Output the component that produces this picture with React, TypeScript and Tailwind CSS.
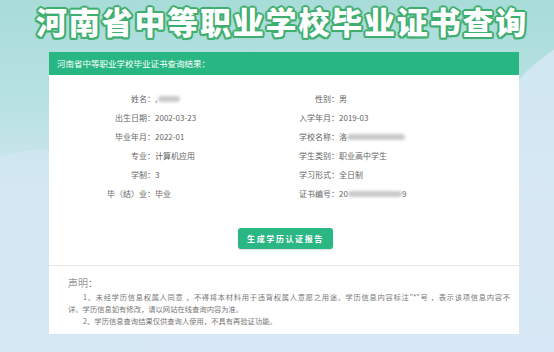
import React from "react";

const font = { fontFamily: '"Noto Sans CJK SC", "Noto Sans", sans-serif' };

function Blur({ w }: { w: number }) {
  return (
    <span
      className="inline-block h-[6px] rounded-full bg-[#c9c9c9] blur-[1.5px] align-middle"
      style={{ width: w }}
    />
  );
}

function Row({ label, value, lw }: { label: string; value: React.ReactNode; lw: string }) {
  return (
    <div className="flex h-[19px] items-center">
      <span className={`${lw} text-right`}>{label}：</span>
      <span className="flex items-center">{value}</span>
    </div>
  );
}

export default function App() {
  return (
    <div
      className="relative h-[352px] w-full overflow-hidden bg-[linear-gradient(180deg,#a8dcd9_0px,#b9e2e3_110px,#d4e7f3_200px,#d8e8f6_352px)]"
      style={font}
    >
      <div className="absolute left-[-90px] top-[150px] h-[260px] w-[260px] rounded-full bg-[#d6e8f3] opacity-60" />
      <div className="absolute left-[482px] top-[28px] h-[300px] w-[300px] rounded-full bg-[#d8e8f5] opacity-80" />

      <h1 className="relative block w-full pl-[10px] pt-[3px] text-center text-[31px] font-black leading-[36px] tracking-[1.8px] text-white [text-shadow:2px_0_0_#3fae6f,-2px_0_0_#3fae6f,0_2px_0_#3fae6f,0_-2px_0_#3fae6f,1.5px_1.5px_0_#3fae6f,-1.5px_1.5px_0_#3fae6f,1.5px_-1.5px_0_#3fae6f,-1.5px_-1.5px_0_#3fae6f,0_0_3px_#2f9a5f]">
        河南省中等职业学校毕业证书查询
      </h1>

      <div className="relative ml-[49px] mt-[13px] w-[470px] bg-white">
        <div className="flex h-[23px] items-center bg-[#28b783] pl-[8px] text-[8.5px] text-white">
          河南省中等职业学校毕业证书查询结果：
        </div>

        <div className="flex flex-col items-center pb-[16px] pt-[14.5px] text-[8px] text-[#666]">
          <div className="grid w-full grid-cols-2">
            <div className="flex flex-col">
              <Row lw="w-[106px]" label="姓名" value={<><span className="mr-[1px]">,</span><Blur w={22} /></>} />
              <Row lw="w-[106px]" label="出生日期" value="2002-03-23" />
              <Row lw="w-[106px]" label="毕业年月" value="2022-01" />
              <Row lw="w-[106px]" label="专业" value="计算机应用" />
              <Row lw="w-[106px]" label="学制" value="3" />
              <Row lw="w-[106px]" label="毕（结）业" value="毕业" />
            </div>
            <div className="flex flex-col">
              <Row lw="w-[55px]" label="性别" value="男" />
              <Row lw="w-[55px]" label="入学年月" value="2019-03" />
              <Row lw="w-[55px]" label="学校名称" value={<><span>洛</span><Blur w={58} /></>} />
              <Row lw="w-[55px]" label="学生类别" value="职业高中学生" />
              <Row lw="w-[55px]" label="学习形式" value="全日制" />
              <Row lw="w-[55px]" label="证书编号" value={<><span>20</span><Blur w={54} /><span>9</span></>} />
            </div>
          </div>

          <button className="ml-[3px] mt-[24.5px] flex h-[21px] w-[95px] items-center justify-center rounded-[3px] bg-[#2ab784] text-[8px] font-bold tracking-[1.6px] text-white shadow-[0_1px_2px_rgba(0,0,0,0.15)]">
            生成学历认证报告
          </button>
        </div>

        <div className="border-t border-[#e6e6e6] pb-[7px] pl-[19px] pr-[9px] pt-[10px]">
          <div className="text-[10px] font-light leading-[14px] text-[#666]">声明：</div>
          <div className="mt-[1px] text-[7.3px] leading-[12px] text-[#777]">
            <div className="whitespace-nowrap pl-[15px] text-justify [text-align-last:justify]">
              1、未经学历信息权属人同意 ，不得将本材料用于违背权属人意愿之用途。学历信息内容标注"*"号 ，表示该项信息内容不
            </div>
            <div className="whitespace-nowrap">详。学历信息如有修改，请以网站在线查询内容为准。</div>
            <div className="whitespace-nowrap pl-[15px]">2、学历信息查询结果仅供查询人使用，不具有再验证功能。</div>
          </div>
        </div>
      </div>
    </div>
  );
}
